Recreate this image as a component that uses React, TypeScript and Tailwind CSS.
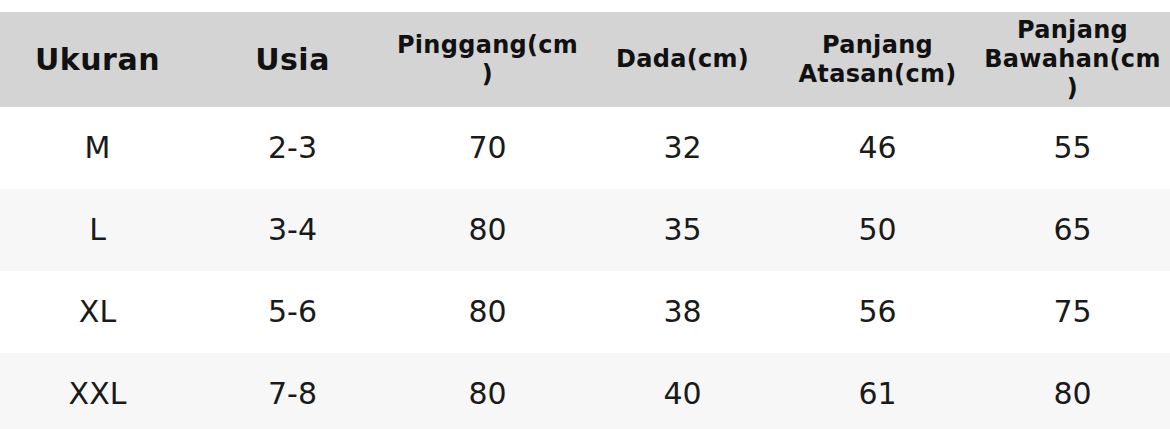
const headers = [
  { label: "Ukuran", big: true },
  { label: "Usia", big: true },
  { label: "Pinggang(cm)", big: false },
  { label: "Dada(cm)", big: false },
  { label: "Panjang Atasan(cm)", big: false },
  { label: "Panjang Bawahan(cm)", big: false },
];

const rows = [
  ["M", "2-3", "70", "32", "46", "55"],
  ["L", "3-4", "80", "35", "50", "65"],
  ["XL", "5-6", "80", "38", "56", "75"],
  ["XXL", "7-8", "80", "40", "61", "80"],
];

export default function App() {
  return (
    <div className="h-[429px] w-[1170px] overflow-hidden bg-white pt-[12px] font-['DejaVu_Sans',sans-serif]">
      {/* Header */}
      <div className="grid h-[95px] grid-cols-6 bg-[#d4d4d4] text-[#111]">
        {headers.map((h) => (
          <div
            key={h.label}
            className="flex items-center justify-center px-[5px] text-center"
          >
            <span
              className={
                h.big
                  ? "text-[30px] font-bold leading-[36px] tracking-[0.5px]"
                  : "text-[24px] font-bold leading-[29px] tracking-[0.3px] [overflow-wrap:break-word] w-full"
              }
            >
              {h.label}
            </span>
          </div>
        ))}
      </div>

      {/* Rows */}
      {rows.map((row, i) => (
        <div
          key={row[0]}
          className={`grid h-[82px] grid-cols-6 text-[#1a1a1a] ${
            i % 2 === 1 ? "bg-[#f7f7f7]" : "bg-white"
          }`}
        >
          {row.map((cell, j) => (
            <div
              key={j}
              className="flex items-center justify-center text-[30px] leading-none"
            >
              {cell}
            </div>
          ))}
        </div>
      ))}
    </div>
  );
}
